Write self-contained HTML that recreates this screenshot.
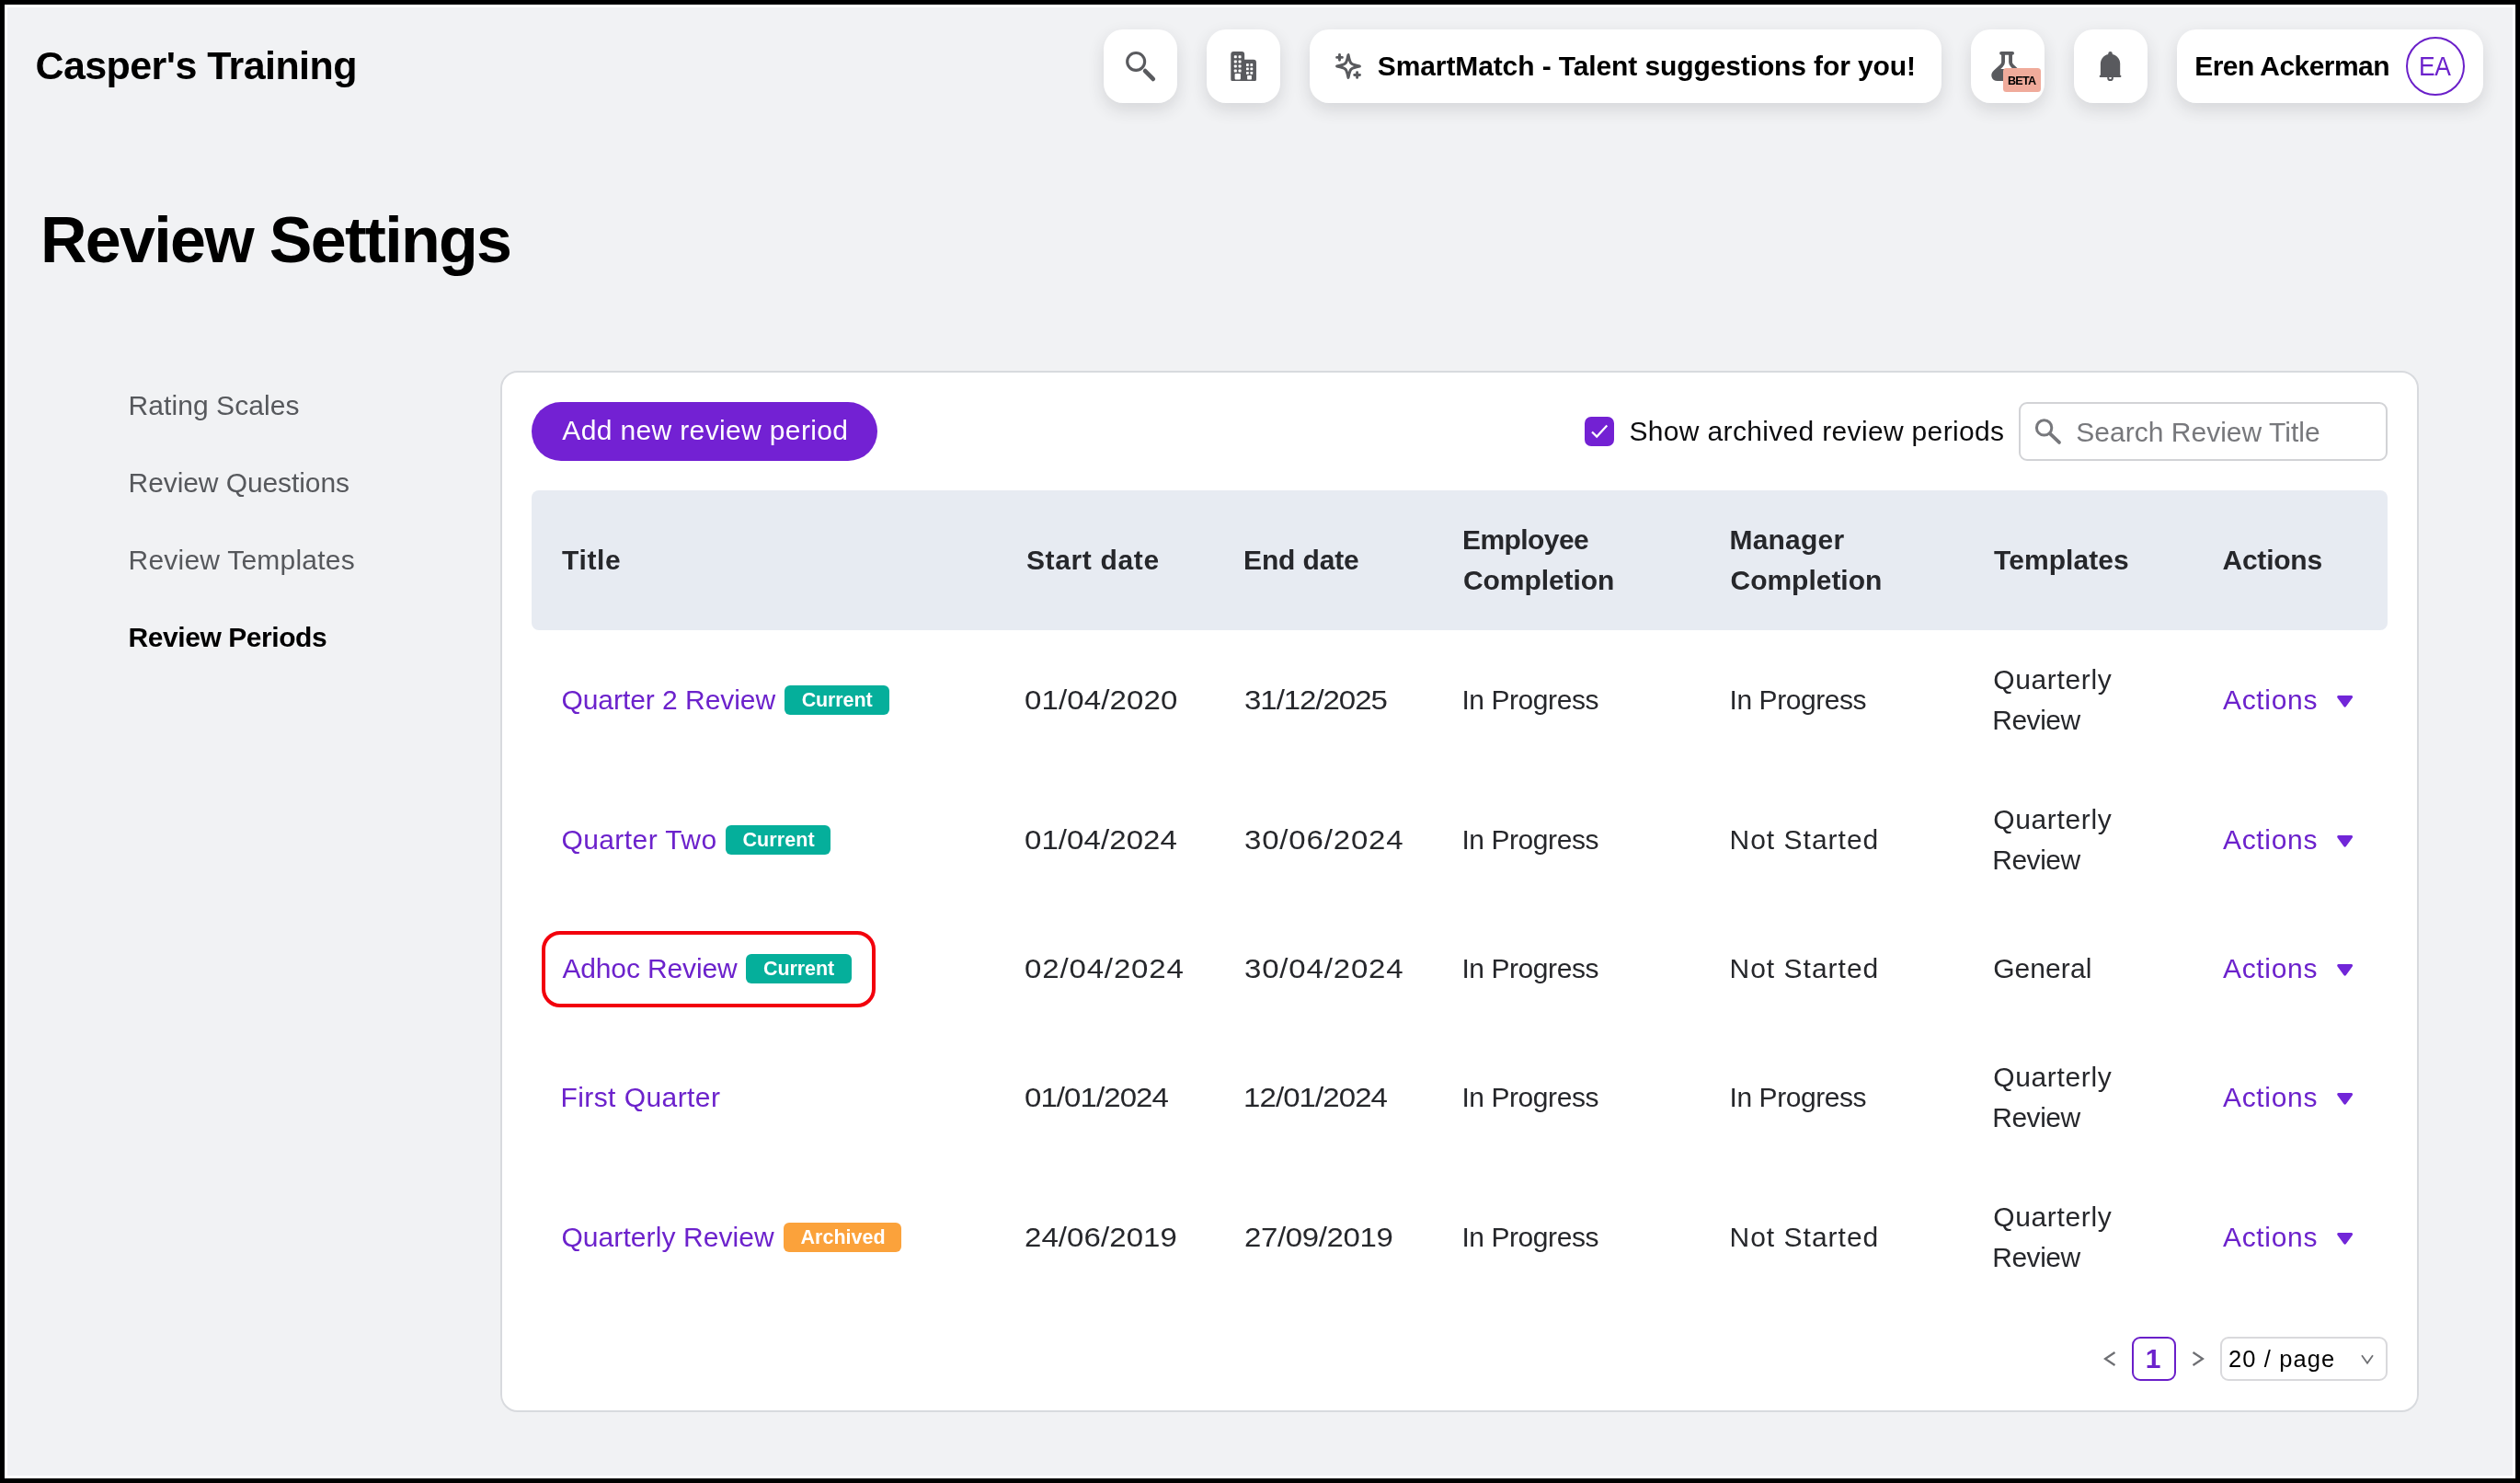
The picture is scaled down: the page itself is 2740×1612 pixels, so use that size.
<!DOCTYPE html>
<html lang="en">
<head>
<meta charset="utf-8">
<title>Review Settings</title>
<style>
*{box-sizing:border-box;margin:0;padding:0}
html,body{width:2740px;height:1612px;overflow:hidden;background:#000}
body{position:relative;font-family:"Liberation Sans",sans-serif}
.frame{position:absolute;left:5px;top:5px;width:2730px;height:1602px;background:#fff}
.page{position:absolute;left:8px;top:8px;width:2724px;height:1596px;background:#f1f2f4}
.abs{position:absolute}
.txt{position:absolute;left:0;top:0;width:2740px;height:1612px;will-change:transform}
.t{position:absolute;line-height:1;white-space:nowrap}
.hbtn{position:absolute;top:32px;height:80px;background:#fff;border-radius:21px;box-shadow:0 7px 18px rgba(40,44,52,.14)}
.card{position:absolute;left:544px;top:403px;width:2086px;height:1132px;background:#fff;border:2px solid #d8dade;border-radius:19px}
.addbtn{position:absolute;left:578px;top:437px;width:376px;height:64px;border-radius:32px;background:#7321d3}
.thead{position:absolute;left:578px;top:533px;width:2018px;height:152px;background:#e7ebf2;border-radius:8px}
.chk{position:absolute;left:1723px;top:453px;width:32px;height:32px;border-radius:7px;background:#7321d3}
.sinput{position:absolute;left:2195px;top:437px;width:401px;height:64px;border:2px solid #d2d3d6;border-radius:9px;background:#fff}
.badge{position:absolute;border-radius:6px}
.hl{position:absolute;left:589px;top:1012px;width:363px;height:83px;border:4.5px solid #f2000c;border-radius:20px}
.pg1{position:absolute;left:2318px;top:1453px;width:48px;height:48px;border:2px solid #6a1fc9;border-radius:9px;background:#fff}
.psel{position:absolute;left:2414px;top:1453px;width:182px;height:48px;border:2px solid #d9d9dc;border-radius:9px;background:#fff}
</style>
</head>
<body>
<div class="frame"></div>
<div class="page"></div>

<!-- top bar buttons -->
<div class="hbtn" style="left:1200px;width:80px"></div>
<div class="hbtn" style="left:1312px;width:80px"></div>
<div class="hbtn" style="left:1424px;width:687px"></div>
<div class="hbtn" style="left:2143px;width:80px"></div>
<div class="hbtn" style="left:2255px;width:80px"></div>
<div class="hbtn" style="left:2367px;width:333px"></div>

<!-- search icon -->
<svg class="abs" style="left:1215px;top:45px" width="55" height="55" viewBox="0 0 55 55"><circle cx="20.150" cy="21.950" r="9.470" fill="none" stroke="#595a5e" stroke-width="3.150"/><path d="M30.100 32.100L38.800 40.900" stroke="#595a5e" stroke-width="4.700" stroke-linecap="round"/></svg>
<!-- building icon -->
<svg class="abs" style="left:1327px;top:45px" width="55" height="55" viewBox="0 0 55 55"><path d="M14.300 10.900H23.150a3 3 0 0 1 3 3V19.660H35.950a3 3 0 0 1 3 3V41.500a1.500 1.500 0 0 1-1.500 1.500H12.800a1.500 1.500 0 0 1-1.500-1.500V13.900a3 3 0 0 1 3-3z" fill="#595a5e"/><g fill="#fff"><rect x="14.8" y="15.2" width="3" height="3" rx=".7"/><rect x="19.55" y="15.2" width="3" height="3" rx=".7"/><rect x="14.8" y="20.4" width="3" height="3" rx=".7"/><rect x="19.55" y="20.4" width="3" height="3" rx=".7"/><rect x="14.8" y="25.5" width="3" height="3" rx=".7"/><rect x="19.55" y="25.5" width="3" height="3" rx=".7"/><rect x="14.8" y="30.6" width="3" height="3" rx=".7"/><rect x="19.55" y="30.6" width="3" height="3" rx=".7"/><rect x="28.0" y="24.1" width="2.800" height="2.800" rx=".6"/><rect x="32.4" y="24.1" width="2.800" height="2.800" rx=".6"/><rect x="28.0" y="28.55" width="2.800" height="2.800" rx=".6"/><rect x="32.4" y="28.55" width="2.800" height="2.800" rx=".6"/><rect x="28.0" y="33.0" width="2.800" height="2.800" rx=".6"/><rect x="32.4" y="33.0" width="2.800" height="2.800" rx=".6"/><rect x="15.600" y="35.100" width="6.300" height="6.300" rx=".8"/><rect x="29.100" y="37.100" width="4.800" height="4.300" rx=".7"/></g></svg>
<!-- sparkle icon -->
<svg class="abs" style="left:1440px;top:45px" width="60" height="55" viewBox="0 0 60 55" fill="none" stroke="#595a5e" stroke-linecap="round" stroke-linejoin="round"><g transform="translate(26 27)"><path d="M0,-12.400Q-1.600,-4.600 -3.200,-3.200Q-4.600,-1.600 -12.400,0Q-4.600,1.600 -3.200,3.200Q-1.600,4.600 0,12.400Q1.600,4.600 3.200,3.200Q4.600,1.600 12.400,0Q4.600,-1.600 3.200,-3.200Q1.600,-4.600 0,-12.400z" stroke-width="3"/></g><path d="M16.500 14.500v5.800M13.600 17.400h5.800M35.600 33.600v5.800M32.700 36.500h5.800" stroke-width="2.900"/></svg>
<!-- flask icon -->
<svg class="abs" style="left:2155px;top:45px" width="70" height="60" viewBox="0 0 70 60"><path d="M17.500 29.900H36.600L39.800 33C43.600 36.600 41.700 41 37.300 41H16.800C12.400 41 10.500 36.600 14.300 33z" fill="#595a5e"/><path d="M21 12.850H33.100M23.050 12.850V22.500C23.050 24.200 22.500 25.200 21.300 26.300L14.300 33C10.500 36.600 12.400 41 16.800 41H37.300C41.700 41 43.600 36.600 39.800 33L32.800 26.300C31.600 25.200 31.050 24.200 31.050 22.500V12.850" fill="none" stroke="#595a5e" stroke-width="3.850" stroke-linecap="round" stroke-linejoin="round"/></svg>
<div class="abs" style="left:2178px;top:74px;width:41px;height:25.800px;border-radius:3.500px;background:#f0ab9b"></div>
<!-- bell icon -->
<svg class="abs" style="left:2270px;top:45px" width="50" height="55" viewBox="0 0 50 55"><circle cx="24.550" cy="39.700" r="2.350" fill="none" stroke="#595a5e" stroke-width="2"/><path d="M13.900 37.500V24.300a10.650 10.600 0 0 1 21.300 0V37.500z" fill="#595a5e"/><rect x="12.700" y="36.700" width="23.700" height="2.400" rx="1.100" fill="#595a5e"/><circle cx="24.550" cy="13.200" r="2.250" fill="#595a5e"/></svg>
<!-- avatar -->
<div class="abs" style="left:2616px;top:40px;width:64px;height:64px;border:2.400px solid #6a1fc9;border-radius:50%"></div>

<!-- card -->
<div class="card"></div>
<div class="addbtn"></div>
<div class="chk"></div>
<svg class="abs" style="left:1723px;top:453px" width="32" height="32" viewBox="0 0 32 32"><path d="M8 16.500l5.200 5.100L24.300 9.600" fill="none" stroke="#fff" stroke-width="2.200" stroke-linecap="butt" stroke-linejoin="miter"/></svg>
<div class="sinput"></div>
<svg class="abs" style="left:2211px;top:453px" width="32" height="32" viewBox="0 0 32 32"><circle cx="11.600" cy="11.900" r="8.200" fill="none" stroke="#77787c" stroke-width="3"/><path d="M18 18.300L28 27.900" stroke="#77787c" stroke-width="3.800" stroke-linecap="round"/></svg>
<div class="thead"></div>
<div class="badge" style="left:852.7px;top:745.1px;width:114.3px;height:32.1px;background:#05af9b"></div>
<div class="badge" style="left:789.2px;top:897.1px;width:113.8px;height:32.1px;background:#05af9b"></div>
<div class="badge" style="left:811.0px;top:1037.1px;width:115.0px;height:32.1px;background:#05af9b"></div>
<div class="badge" style="left:852.0px;top:1329.1px;width:127.7px;height:32.1px;background:#fba23b"></div>
<div class="hl"></div>
<svg class="abs" style="left:2539px;top:754px" width="22" height="17" viewBox="0 0 22 17"><path d="M3.700 2H17.600a1.500 1.500 0 0 1 1.200 2.400L11.850 13.900a1.500 1.500 0 0 1-2.400 0L2.500 4.400A1.500 1.500 0 0 1 3.700 2z" fill="#7126d8"/></svg>
<svg class="abs" style="left:2539px;top:906px" width="22" height="17" viewBox="0 0 22 17"><path d="M3.700 2H17.600a1.500 1.500 0 0 1 1.200 2.400L11.850 13.900a1.500 1.500 0 0 1-2.400 0L2.500 4.400A1.500 1.500 0 0 1 3.700 2z" fill="#7126d8"/></svg>
<svg class="abs" style="left:2539px;top:1046px" width="22" height="17" viewBox="0 0 22 17"><path d="M3.700 2H17.600a1.500 1.500 0 0 1 1.200 2.400L11.850 13.900a1.500 1.500 0 0 1-2.400 0L2.500 4.400A1.500 1.500 0 0 1 3.700 2z" fill="#7126d8"/></svg>
<svg class="abs" style="left:2539px;top:1186px" width="22" height="17" viewBox="0 0 22 17"><path d="M3.700 2H17.600a1.500 1.500 0 0 1 1.200 2.400L11.850 13.900a1.500 1.500 0 0 1-2.400 0L2.500 4.400A1.500 1.500 0 0 1 3.700 2z" fill="#7126d8"/></svg>
<svg class="abs" style="left:2539px;top:1338px" width="22" height="17" viewBox="0 0 22 17"><path d="M3.700 2H17.600a1.500 1.500 0 0 1 1.200 2.400L11.850 13.900a1.500 1.500 0 0 1-2.400 0L2.500 4.400A1.500 1.500 0 0 1 3.700 2z" fill="#7126d8"/></svg>
<!-- pagination -->
<svg class="abs" style="left:2286px;top:1467px" width="16" height="20" viewBox="0 0 16 20"><path d="M13.500 3L3 10l10.500 7" fill="none" stroke="#6e6f73" stroke-width="2.200"/></svg>
<div class="pg1"></div>
<svg class="abs" style="left:2382px;top:1467px" width="16" height="20" viewBox="0 0 16 20"><path d="M2.500 3L13 10 2.500 17" fill="none" stroke="#6e6f73" stroke-width="2.200"/></svg>
<div class="psel"></div>
<svg class="abs" style="left:2566px;top:1471px" width="16" height="13" viewBox="0 0 16 13"><path d="M2 2.200l6 8.600 6-8.600" fill="none" stroke="#6e6f73" stroke-width="1.800"/></svg>

<div class="txt">
<span class="t" style="left:38.40px;top:50px;font-size:43px;font-weight:700;color:#000;letter-spacing:-0.566px">Casper's Training</span>
<span class="t" style="left:1497.80px;top:57px;font-size:30px;font-weight:700;color:#000;letter-spacing:-0.110px">SmartMatch - Talent suggestions for you!</span>
<span class="t" style="left:2386.20px;top:57px;font-size:30px;font-weight:700;color:#000;letter-spacing:-0.557px">Eren Ackerman</span>
<span class="t" style="left:2630.04px;top:57px;font-size:30px;font-weight:400;color:#6c22cc;letter-spacing:-0.396px;transform:scaleX(0.88);transform-origin:0 0">EA</span>
<span class="t" style="left:2182.90px;top:82px;font-size:12.6px;font-weight:700;color:#000;letter-spacing:-0.684px">BETA</span>
<span class="t" style="left:44.00px;top:226px;font-size:70px;font-weight:700;color:#000;letter-spacing:-1.707px">Review Settings</span>
<span class="t" style="left:139.60px;top:426px;font-size:30px;font-weight:400;color:#56585c;letter-spacing:0.059px">Rating Scales</span>
<span class="t" style="left:139.60px;top:510px;font-size:30px;font-weight:400;color:#56585c;letter-spacing:-0.091px">Review Questions</span>
<span class="t" style="left:139.60px;top:594px;font-size:30px;font-weight:400;color:#56585c;letter-spacing:0.211px">Review Templates</span>
<span class="t" style="left:139.60px;top:678px;font-size:30px;font-weight:700;color:#000;letter-spacing:-0.437px">Review Periods</span>
<span class="t" style="left:611.30px;top:453px;font-size:30px;font-weight:400;color:#fff;letter-spacing:0.359px">Add new review period</span>
<span class="t" style="left:1771.50px;top:454px;font-size:30px;font-weight:400;color:#0c0c0e;letter-spacing:0.332px">Show archived review periods</span>
<span class="t" style="left:2257.20px;top:455px;font-size:30px;font-weight:400;color:#77787c;letter-spacing:0.024px">Search Review Title</span>
<span class="t" style="left:611.10px;top:594px;font-size:30px;font-weight:700;color:#26272b;letter-spacing:0.614px">Title</span>
<span class="t" style="left:1115.90px;top:594px;font-size:30px;font-weight:700;color:#26272b;letter-spacing:0.646px">Start date</span>
<span class="t" style="left:1352.00px;top:594px;font-size:30px;font-weight:700;color:#26272b;letter-spacing:-0.128px">End date</span>
<span class="t" style="left:1590.00px;top:572px;font-size:30px;font-weight:700;color:#26272b;letter-spacing:-0.577px">Employee</span>
<span class="t" style="left:1591.00px;top:616px;font-size:30px;font-weight:700;color:#26272b;letter-spacing:-0.073px">Completion</span>
<span class="t" style="left:1880.50px;top:572px;font-size:30px;font-weight:700;color:#26272b;letter-spacing:0.201px">Manager</span>
<span class="t" style="left:1881.50px;top:616px;font-size:30px;font-weight:700;color:#26272b;letter-spacing:-0.018px">Completion</span>
<span class="t" style="left:2168.00px;top:594px;font-size:30px;font-weight:700;color:#26272b;letter-spacing:0.065px">Templates</span>
<span class="t" style="left:2416.50px;top:594px;font-size:30px;font-weight:700;color:#26272b;letter-spacing:-0.238px">Actions</span>
<span class="t" style="left:610.40px;top:746px;font-size:30px;font-weight:400;color:#6c22cc;letter-spacing:-0.044px">Quarter 2 Review</span>
<span class="t" style="left:871.70px;top:751px;font-size:21.5px;font-weight:700;color:#fff;letter-spacing:-0.131px">Current</span>
<span class="t" style="left:1114.40px;top:746px;font-size:30px;font-weight:400;color:#26272b;letter-spacing:0.120px;transform:scaleX(1.1);transform-origin:0 0">01/04/2020</span>
<span class="t" style="left:1352.90px;top:746px;font-size:30px;font-weight:400;color:#26272b;letter-spacing:-0.940px;transform:scaleX(1.1);transform-origin:0 0">31/12/2025</span>
<span class="t" style="left:1589.40px;top:746px;font-size:30px;font-weight:400;color:#26272b;letter-spacing:-0.430px">In Progress</span>
<span class="t" style="left:1880.50px;top:746px;font-size:30px;font-weight:400;color:#26272b;letter-spacing:-0.430px">In Progress</span>
<span class="t" style="left:2167.20px;top:724px;font-size:30px;font-weight:400;color:#26272b;letter-spacing:0.654px">Quarterly</span>
<span class="t" style="left:2166.20px;top:768px;font-size:30px;font-weight:400;color:#26272b;letter-spacing:-0.460px">Review</span>
<span class="t" style="left:2417.00px;top:746px;font-size:30px;font-weight:400;color:#6c22cc;letter-spacing:0.670px">Actions</span>
<span class="t" style="left:610.40px;top:898px;font-size:30px;font-weight:400;color:#6c22cc;letter-spacing:0.423px">Quarter Two</span>
<span class="t" style="left:807.50px;top:903px;font-size:21.5px;font-weight:700;color:#fff;letter-spacing:0.086px">Current</span>
<span class="t" style="left:1114.40px;top:898px;font-size:30px;font-weight:400;color:#26272b;letter-spacing:0.070px;transform:scaleX(1.1);transform-origin:0 0">01/04/2024</span>
<span class="t" style="left:1352.90px;top:898px;font-size:30px;font-weight:400;color:#26272b;letter-spacing:0.757px;transform:scaleX(1.1);transform-origin:0 0">30/06/2024</span>
<span class="t" style="left:1589.40px;top:898px;font-size:30px;font-weight:400;color:#26272b;letter-spacing:-0.430px">In Progress</span>
<span class="t" style="left:1880.50px;top:898px;font-size:30px;font-weight:400;color:#26272b;letter-spacing:1.004px">Not Started</span>
<span class="t" style="left:2167.20px;top:876px;font-size:30px;font-weight:400;color:#26272b;letter-spacing:0.654px">Quarterly</span>
<span class="t" style="left:2166.20px;top:920px;font-size:30px;font-weight:400;color:#26272b;letter-spacing:-0.460px">Review</span>
<span class="t" style="left:2417.00px;top:898px;font-size:30px;font-weight:400;color:#6c22cc;letter-spacing:0.670px">Actions</span>
<span class="t" style="left:611.40px;top:1038px;font-size:30px;font-weight:400;color:#6c22cc;letter-spacing:-0.136px">Adhoc Review</span>
<span class="t" style="left:830.00px;top:1043px;font-size:21.5px;font-weight:700;color:#fff;letter-spacing:-0.081px">Current</span>
<span class="t" style="left:1114.40px;top:1038px;font-size:30px;font-weight:400;color:#26272b;letter-spacing:0.777px;transform:scaleX(1.1);transform-origin:0 0">02/04/2024</span>
<span class="t" style="left:1352.90px;top:1038px;font-size:30px;font-weight:400;color:#26272b;letter-spacing:0.757px;transform:scaleX(1.1);transform-origin:0 0">30/04/2024</span>
<span class="t" style="left:1589.40px;top:1038px;font-size:30px;font-weight:400;color:#26272b;letter-spacing:-0.430px">In Progress</span>
<span class="t" style="left:1880.50px;top:1038px;font-size:30px;font-weight:400;color:#26272b;letter-spacing:1.004px">Not Started</span>
<span class="t" style="left:2167.20px;top:1038px;font-size:30px;font-weight:400;color:#26272b;letter-spacing:0.073px">General</span>
<span class="t" style="left:2417.00px;top:1038px;font-size:30px;font-weight:400;color:#6c22cc;letter-spacing:0.670px">Actions</span>
<span class="t" style="left:609.40px;top:1178px;font-size:30px;font-weight:400;color:#6c22cc;letter-spacing:0.436px">First Quarter</span>
<span class="t" style="left:1114.40px;top:1178px;font-size:30px;font-weight:400;color:#26272b;letter-spacing:-0.839px;transform:scaleX(1.1);transform-origin:0 0">01/01/2024</span>
<span class="t" style="left:1351.80px;top:1178px;font-size:30px;font-weight:400;color:#26272b;letter-spacing:-0.829px;transform:scaleX(1.1);transform-origin:0 0">12/01/2024</span>
<span class="t" style="left:1589.40px;top:1178px;font-size:30px;font-weight:400;color:#26272b;letter-spacing:-0.430px">In Progress</span>
<span class="t" style="left:1880.50px;top:1178px;font-size:30px;font-weight:400;color:#26272b;letter-spacing:-0.430px">In Progress</span>
<span class="t" style="left:2167.20px;top:1156px;font-size:30px;font-weight:400;color:#26272b;letter-spacing:0.654px">Quarterly</span>
<span class="t" style="left:2166.20px;top:1200px;font-size:30px;font-weight:400;color:#26272b;letter-spacing:-0.460px">Review</span>
<span class="t" style="left:2417.00px;top:1178px;font-size:30px;font-weight:400;color:#6c22cc;letter-spacing:0.670px">Actions</span>
<span class="t" style="left:610.40px;top:1330px;font-size:30px;font-weight:400;color:#6c22cc;letter-spacing:0.080px">Quarterly Review</span>
<span class="t" style="left:870.50px;top:1335px;font-size:21.5px;font-weight:700;color:#fff;letter-spacing:0.018px">Archived</span>
<span class="t" style="left:1114.40px;top:1330px;font-size:30px;font-weight:400;color:#26272b;letter-spacing:0.070px;transform:scaleX(1.1);transform-origin:0 0">24/06/2019</span>
<span class="t" style="left:1352.90px;top:1330px;font-size:30px;font-weight:400;color:#26272b;letter-spacing:-0.334px;transform:scaleX(1.1);transform-origin:0 0">27/09/2019</span>
<span class="t" style="left:1589.40px;top:1330px;font-size:30px;font-weight:400;color:#26272b;letter-spacing:-0.430px">In Progress</span>
<span class="t" style="left:1880.50px;top:1330px;font-size:30px;font-weight:400;color:#26272b;letter-spacing:1.004px">Not Started</span>
<span class="t" style="left:2167.20px;top:1308px;font-size:30px;font-weight:400;color:#26272b;letter-spacing:0.654px">Quarterly</span>
<span class="t" style="left:2166.20px;top:1352px;font-size:30px;font-weight:400;color:#26272b;letter-spacing:-0.460px">Review</span>
<span class="t" style="left:2417.00px;top:1330px;font-size:30px;font-weight:400;color:#6c22cc;letter-spacing:0.670px">Actions</span>
<span class="t" style="left:2332.85px;top:1462px;font-size:30px;font-weight:700;color:#6c22cc;letter-spacing:0.000px">1</span>
<span class="t" style="left:2423.00px;top:1465px;font-size:25.5px;font-weight:400;color:#000;letter-spacing:1.105px">20 / page</span>
</div>
</body>
</html>
